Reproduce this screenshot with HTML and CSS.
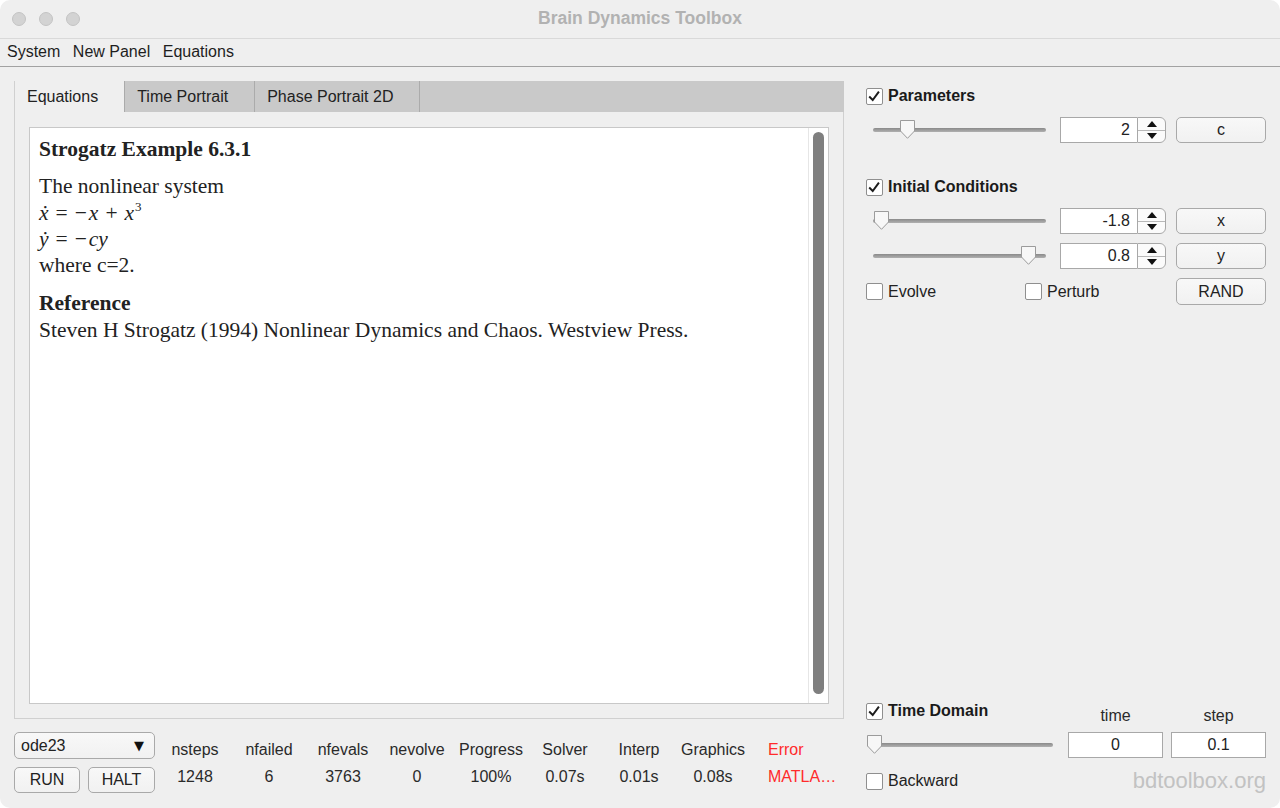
FILE: index.html
```html
<!DOCTYPE html>
<html>
<head>
<meta charset="utf-8">
<title>Brain Dynamics Toolbox</title>
<link rel="stylesheet" href="styles.css">
</head>
<body>
<div class="window">
  <header class="titlebar">
    <div class="lights"><span class="light"></span><span class="light"></span><span class="light"></span></div>
    <div class="title">Brain Dynamics Toolbox</div>
    <div></div>
  </header>
  <nav class="menubar"><span>System</span><span>New Panel</span><span>Equations</span></nav>
  <main class="main">
    <section class="left">
      <div class="tabgroup">
        <div class="tabs">
          <div class="tab active">Equations</div>
          <div class="tab">Time Portrait</div>
          <div class="tab">Phase Portrait 2D</div>
        </div>
        <div class="tabbody">
          <div class="doc">
            <div class="doc-text">
              <div class="doc-h">Strogatz Example 6.3.1</div>
              <div>The nonlinear system</div>
              <div><i>ẋ</i><span class="op">=</span><span class="neg">−</span><i>x</i><span class="op">+</span><i>x</i><sup class="sup">3</sup></div>
              <div><i>ẏ</i><span class="op">=</span><span class="neg">−</span><i>cy</i></div>
              <div>where c=2.</div>
              <div class="doc-h ref">Reference</div>
              <div>Steven H Strogatz (1994) Nonlinear Dynamics and Chaos. Westview Press.</div>
            </div>
            <div class="scroll"><div class="scroll-thumb"></div></div>
          </div>
        </div>
      </div>
      <div class="controlbar">
        <div class="solverctl">
          <div class="dropdown"><span>ode23</span><span class="caret">▼</span></div>
          <div class="btnrow"><div class="btn run">RUN</div><div class="btn halt">HALT</div></div>
        </div>
        <div class="stats">
          <div>nsteps</div><div>nfailed</div><div>nfevals</div><div>nevolve</div><div>Progress</div><div>Solver</div><div>Interp</div><div>Graphics</div><div class="err">Error</div>
          <div>1248</div><div>6</div><div>3763</div><div>0</div><div>100%</div><div>0.07s</div><div>0.01s</div><div>0.08s</div><div class="err">MATLA…</div>
        </div>
      </div>
    </section>
    <aside class="right">
      <div class="check-row">
        <span class="cb"><svg viewBox="0 0 17 17" width="15" height="15"><path d="M2.5 8.5 L6.5 12.5 L13.5 3" fill="none" stroke="#1c1c1c" stroke-width="2.2"/></svg></span>
        <span class="hd">Parameters</span>
      </div>
      <div class="ctl-row first">
        <div class="slider"><div class="track"><svg class="knob" style="left:27px" viewBox="0 0 15 19" width="15" height="19"><polygon points="0.5,0.5 14.5,0.5 14.5,11 7.5,18.3 0.5,11" fill="#f7f7f7" stroke="#9b9b9b"/></svg></div></div>
        <div class="spin"><div class="spin-val">2</div><div class="spin-arrows"><span class="up"></span><span class="down"></span></div></div>
        <div class="btn side">c</div>
      </div>

      <div class="check-row ic">
        <span class="cb"><svg viewBox="0 0 17 17" width="15" height="15"><path d="M2.5 8.5 L6.5 12.5 L13.5 3" fill="none" stroke="#1c1c1c" stroke-width="2.2"/></svg></span>
        <span class="hd">Initial Conditions</span>
      </div>
      <div class="ctl-row first">
        <div class="slider"><div class="track"><svg class="knob" style="left:1px" viewBox="0 0 15 19" width="15" height="19"><polygon points="0.5,0.5 14.5,0.5 14.5,11 7.5,18.3 0.5,11" fill="#f7f7f7" stroke="#9b9b9b"/></svg></div></div>
        <div class="spin"><div class="spin-val">-1.8</div><div class="spin-arrows"><span class="up"></span><span class="down"></span></div></div>
        <div class="btn side">x</div>
      </div>
      <div class="ctl-row next">
        <div class="slider"><div class="track"><svg class="knob" style="left:148px" viewBox="0 0 15 19" width="15" height="19"><polygon points="0.5,0.5 14.5,0.5 14.5,11 7.5,18.3 0.5,11" fill="#f7f7f7" stroke="#9b9b9b"/></svg></div></div>
        <div class="spin"><div class="spin-val">0.8</div><div class="spin-arrows"><span class="up"></span><span class="down"></span></div></div>
        <div class="btn side">y</div>
      </div>
      <div class="opt-row">
        <div class="check-row evolve"><span class="cb"></span><span>Evolve</span></div>
        <div class="check-row perturb"><span class="cb"></span><span>Perturb</span></div>
        <div class="btn side rand">RAND</div>
      </div>

      <div class="td-head">
        <div class="check-row td-check">
          <span class="cb"><svg viewBox="0 0 17 17" width="15" height="15"><path d="M2.5 8.5 L6.5 12.5 L13.5 3" fill="none" stroke="#1c1c1c" stroke-width="2.2"/></svg></span>
          <span class="hd">Time Domain</span>
        </div>
        <div class="td-label">time</div>
        <div class="td-label step">step</div>
      </div>
      <div class="td-row">
        <div class="slider full"><div class="track"><svg class="knob" style="left:0px" viewBox="0 0 15 19" width="15" height="19"><polygon points="0.5,0.5 14.5,0.5 14.5,11 7.5,18.3 0.5,11" fill="#f7f7f7" stroke="#9b9b9b"/></svg></div></div>
        <div class="field">0</div>
        <div class="field step">0.1</div>
      </div>
      <div class="bk-row">
        <div class="check-row"><span class="cb"></span><span>Backward</span></div>
        <div class="brand">bdtoolbox.org</div>
      </div>
    </aside>
  </main>
</div>
</body>
</html>
```
FILE: styles.css
```css
* { box-sizing: border-box; margin: 0; padding: 0; }
html, body { width: 1280px; height: 808px; overflow: hidden; background: #ffffff; }
body { font-family: "Liberation Sans", Arial, sans-serif; font-size: 16px; color: #222222; }

.window {
  width: 1280px; height: 808px; background: #efefef;
  border-radius: 10px; overflow: hidden;
  display: flex; flex-direction: column;
}

.titlebar {
  height: 39px; border-bottom: 1px solid #d9d9d9;
  display: grid; grid-template-columns: 1fr auto 1fr; align-items: center;
}
.lights { display: flex; gap: 13px; padding-left: 12px; }
.light { width: 14px; height: 14px; border-radius: 50%; background: #d3d3d3; border: 1px solid #c4c4c4; }
.title { font-weight: bold; font-size: 17.5px; color: #b2b2b2; padding-bottom: 2px; }

.menubar {
  height: 28px; border-bottom: 1px solid #a2a2a2;
  display: flex; align-items: center; gap: 12.5px; padding: 0 0 2px 7px;
  color: #1e1e1e;
}

.main { flex: 1; display: flex; }

.left { width: 830px; margin-left: 14px; padding-top: 14px; display: flex; flex-direction: column; }
.tabgroup { height: 638px; display: flex; flex-direction: column; }
.tabs { height: 31px; background: #c9c9c9; display: flex; }
.tab { padding: 0 26px 0 12px; line-height: 31px; border-right: 1px solid #ababab; color: #222; }
.tab.active { background: #efefef; border-left: 1px solid #d0d0d0; padding-left: 12px; }

.tabbody {
  flex: 1; border: 1px solid #d0d0d0; border-top: none;
  padding: 15px 14px 14px 14px; display: flex;
}
.doc { flex: 1; background: #ffffff; border: 1px solid #c8c8c8; display: flex; }
.doc-text {
  flex: 1; padding: 8px 9px;
  font-family: "Liberation Serif", "Times New Roman", serif;
  font-size: 21.5px; line-height: 26.3px; color: #222222;
}
.doc-h { font-weight: bold; margin-bottom: 11px; }
.doc-h.ref { margin-top: 12px; margin-bottom: 0; }
.op { margin: 0 7px; }
.neg { margin-right: 2px; }
.sup { font-size: 13px; line-height: 0; vertical-align: 9px; margin-left: 1px; }
.scroll { width: 20px; border-left: 1px solid #e6e6e6; padding: 4px 4px 9px 4px; }
.scroll-thumb { height: 100%; background: #7f7f7f; border-radius: 6px; }

.controlbar { display: flex; margin-top: 13px; }
.solverctl { width: 141px; }
.dropdown {
  height: 27px; border: 1px solid #a9a9a9; border-radius: 5px;
  background: linear-gradient(#f8f8f8, #f1f1f1);
  display: flex; align-items: center; justify-content: space-between;
  padding: 0 10px 0 6px;
}
.caret { font-family: "DejaVu Sans", sans-serif; font-size: 13px; color: #111; }
.btnrow { display: flex; gap: 8px; margin-top: 8px; }
.btn {
  height: 26px; border: 1px solid #a9a9a9; border-radius: 5px;
  background: linear-gradient(#f8f8f8, #f1f1f1);
  display: flex; align-items: center; justify-content: center;
  color: #222;
}
.btn.run { width: 66px; }
.btn.halt { width: 67px; }

.stats {
  margin-left: 3px; padding-top: 8px;
  display: grid; grid-template-columns: repeat(9, 74px);
  grid-auto-rows: 20px; row-gap: 7px;
  line-height: 20px; text-align: center; color: #2a2a2a;
}
.stats .err { color: #ff2b2b; text-align: left; padding-left: 18px; white-space: nowrap; }

.right {
  width: 400px; margin-left: 22px; padding-top: 19px; padding-bottom: 17px;
  display: flex; flex-direction: column;
}
.check-row { display: flex; align-items: center; gap: 5px; height: 20px; }
.cb {
  width: 17px; height: 17px; background: #ffffff; border: 1px solid #8f8f8f; border-radius: 2px;
  display: flex; align-items: center; justify-content: center;
}
.hd { font-weight: bold; color: #1a1a1a; }
.check-row.ic { margin-top: 34px; }

.ctl-row { display: flex; height: 26px; }
.ctl-row.first { margin-top: 11px; }
.ctl-row.next { margin-top: 9px; }
.slider { width: 188px; display: flex; align-items: center; padding: 0 8px 0 7px; }
.slider.full { padding: 0 1px 0 1px; }
.track {
  position: relative; flex: 1; height: 4px; border-radius: 2px;
  background: linear-gradient(#8a8a8a, #b0b0b0);
}
.knob { position: absolute; top: -8px; display: block; }

.spin { width: 106px; margin-left: 6px; display: flex; }
.spin-val {
  flex: 1; background: #ffffff; border: 1px solid #a8a8a8; border-right: none;
  text-align: right; padding-right: 7px; line-height: 24px; color: #222;
}
.spin-arrows {
  width: 29px; border: 1px solid #a8a8a8; border-radius: 0 6px 6px 0;
  background: #fbfbfb; display: flex; flex-direction: column;
}
.spin-arrows span { flex: 1; display: flex; align-items: center; justify-content: center; }
.spin-arrows .down { border-top: 1px solid #b8b8b8; }
.spin-arrows .up::before {
  content: ""; border-left: 5px solid transparent; border-right: 5px solid transparent;
  border-bottom: 6px solid #111;
}
.spin-arrows .down::before {
  content: ""; border-left: 5px solid transparent; border-right: 5px solid transparent;
  border-top: 6px solid #111;
}
.btn.side { width: 90px; margin-left: 10px; }

.opt-row { display: flex; align-items: center; height: 27px; margin-top: 9px; }
.check-row.evolve { width: 159px; }
.check-row.perturb { flex: 1; }
.btn.rand { height: 27px; }

.td-head { display: flex; margin-top: auto; height: 20px; }
.td-check { width: 202px; }
.td-label { width: 95px; text-align: center; padding-top: 5px; line-height: 20px; color: #2a2a2a; }
.td-label.step { margin-left: 8px; }
.td-row { display: flex; height: 26px; margin-top: 11px; }
.field {
  width: 95px; margin-left: 14px; background: #ffffff; border: 1px solid #a8a8a8;
  text-align: center; line-height: 24px; color: #222;
}
.field.step { margin-left: 8px; }
.bk-row { display: flex; justify-content: space-between; align-items: center; height: 20px; margin-top: 13px; }
.brand { font-size: 22px; color: #c2c2c2; }
```
